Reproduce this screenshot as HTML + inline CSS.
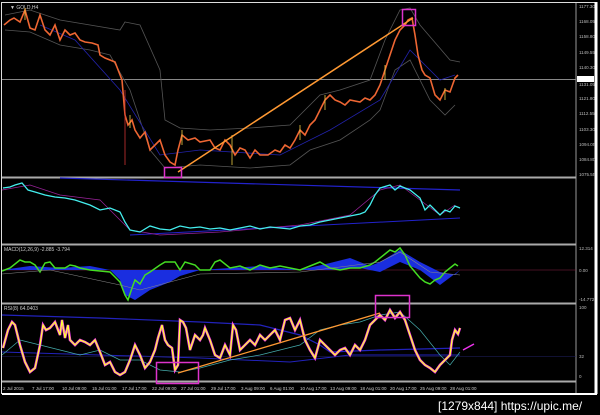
<!DOCTYPE html>
<html><head><meta charset="utf-8"><style>
html,body{margin:0;padding:0;background:#000;width:600px;height:415px;overflow:hidden}
svg{display:block}
text{font-family:"Liberation Sans",sans-serif}
</style></head><body>
<svg width="600" height="415" viewBox="0 0 600 415" xmlns="http://www.w3.org/2000/svg">
<rect width="600" height="415" fill="#000"/>
<rect x="1.5" y="2.5" width="595" height="391" fill="none" stroke="#ddd" stroke-width="1"/>
<line x1="596" y1="2" x2="596" y2="394" stroke="#fff" stroke-width="3"/>
<line x1="2" y1="394" x2="597" y2="394" stroke="#fff" stroke-width="2"/>
<line x1="576" y1="3" x2="576" y2="393" stroke="#999" stroke-width="1"/>
<g stroke="#aaa" stroke-width="2">
<line x1="2" y1="177.5" x2="576" y2="177.5"/>
<line x1="2" y1="244.5" x2="576" y2="244.5"/>
<line x1="2" y1="303.5" x2="576" y2="303.5"/>
<line x1="2" y1="381.5" x2="576" y2="381.5"/>
</g>
<text x="10" y="9" font-size="5" fill="#ccc">▼ GOLD,H4</text>
<line x1="2" y1="79.5" x2="576" y2="79.5" stroke="#888"/>
<rect x="577" y="76" width="17" height="6" fill="#fff"/>
<g font-size="4.5" fill="#bbb">
<text x="579" y="8">1177.30</text><text x="579" y="23">1168.05</text><text x="579" y="38">1158.80</text>
<text x="579" y="54">1149.55</text><text x="579" y="69">1140.30</text><text x="579" y="86">1131.05</text>
<text x="579" y="100">1121.80</text><text x="579" y="115">1112.55</text><text x="579" y="131">1103.30</text>
<text x="579" y="146">1094.05</text><text x="579" y="161">1084.80</text><text x="579" y="176">1075.55</text>
</g>
<polyline fill="none" stroke="#555" stroke-width="0.8" points="5,15 30,10 60,20 90,25 120,30 125,22 140,25 160,70 165,120 180,128 210,130 250,128 290,125 320,95 340,90 370,80 385,40 400,10 410,8 420,25 450,60 460,62"/>
<polyline fill="none" stroke="#555" stroke-width="0.8" points="5,30 30,32 60,45 90,50 110,55 130,90 150,150 165,168 200,165 250,168 290,165 310,150 340,140 370,120 380,110 395,70 410,60 430,100 445,115 455,105"/>
<polyline fill="none" stroke="#22a" stroke-width="0.8" points="40,25 75,40 120,90 160,155 200,150 280,155 330,130 380,100 410,50 440,80 455,75"/>
<polyline fill="none" stroke="#e63" stroke-width="1.6" points="4,25 10,20 14,18 20,22 25,10 30,28 35,30 40,15 45,30 50,35 55,25 60,40 65,30 70,35 75,33 80,40 85,42 92,43 98,45 100,55 105,58 110,60 115,62 122,80 125,115 128,125 132,120 135,130 140,138 145,132 150,150 155,145 160,140 165,155 170,162 175,165 178,150 182,135 188,140 195,138 200,142 210,140 215,148 220,150 225,140 230,145 235,155 240,148 245,150 250,158 255,150 260,155 268,155 275,150 280,152 285,145 290,148 295,140 300,130 305,135 310,125 315,120 320,110 325,100 330,95 335,100 340,102 345,105 350,100 360,102 365,98 370,100 375,95 380,85 385,70 390,55 395,40 400,30 405,25 408,20 412,18 415,35 418,55 422,70 425,75 430,78 435,95 440,100 445,90 450,92 455,78 458,75"/>
<g stroke="#ec4" stroke-width="0.8">
<line x1="25" y1="8" x2="25" y2="20"/><line x1="130" y1="115" x2="130" y2="128"/><line x1="182" y1="130" x2="182" y2="145"/><line x1="232" y1="135" x2="232" y2="165"/><line x1="300" y1="125" x2="300" y2="140"/><line x1="325" y1="95" x2="325" y2="110"/><line x1="385" y1="65" x2="385" y2="80"/><line x1="445" y1="88" x2="445" y2="100"/>
</g>
<line x1="125" y1="90" x2="125" y2="165" stroke="#c33" stroke-width="0.8"/>
<line x1="178" y1="172" x2="413" y2="18" stroke="#f93" stroke-width="1.5"/>
<rect x="164.5" y="167.5" width="17" height="10" fill="none" stroke="#d3c" stroke-width="1.5"/>
<rect x="402.5" y="9.5" width="13" height="16" fill="none" stroke="#d3c" stroke-width="1.5"/>
<line x1="60" y1="178" x2="460" y2="190" stroke="#22c" stroke-width="1.2"/>
<line x1="130" y1="235" x2="460" y2="218" stroke="#22c" stroke-width="1"/>
<polyline fill="none" stroke="#929" stroke-width="0.7" points="2,190 30,185 60,195 100,200 130,230 160,235 220,232 300,225 350,215 380,190 400,185 420,200 440,215 455,205"/>
<polyline fill="none" stroke="#4ee" stroke-width="1.3" points="3,188 10,187 15,185 22,183 28,190 35,192 45,195 55,197 65,198 75,200 90,205 100,210 110,208 120,212 125,222 130,230 140,232 150,226 160,229 170,230 180,226 190,228 200,227 210,229 220,228 230,230 240,228 250,226 260,229 270,227 280,228 290,229 300,226 310,225 320,222 330,220 340,218 350,216 360,214 365,212 370,205 375,195 380,188 390,185 395,190 400,186 410,190 420,198 425,210 430,205 435,210 440,215 445,210 450,212 455,206 460,208"/>
<text x="4" y="251" font-size="5" fill="#ccc">MACD(12,26,9) -2.885 -3.794</text>
<line x1="2" y1="270" x2="576" y2="270" stroke="#824" stroke-width="0.6"/>
<path fill="#1a2ee0" d="M2,270 L30,266 L60,268 L90,266 L110,270 L120,280 L125,295 L135,300 L150,290 L170,282 L180,276 L200,270 L230,268 L260,266 L300,270 L330,263 L350,258 L370,266 L380,262 L400,250 L420,262 L440,272 L455,275 L460,270 L440,285 L420,270 L400,262 L380,272 L360,268 L330,270 L300,270 L260,270 L220,270 L180,270 L150,270 L125,270 L110,270 L60,270 L30,270 Z"/>
<polyline fill="none" stroke="#4d2" stroke-width="1.5" points="2,271 10,268 20,260 25,262 30,262 35,265 40,272 45,263 50,262 55,268 65,268 70,265 75,266 80,268 90,270 100,271 110,272 120,282 125,295 128,300 132,288 135,280 140,284 145,275 150,272 160,265 165,262 175,262 180,270 185,262 195,265 200,270 210,270 215,262 220,260 230,268 240,266 250,270 260,265 270,268 280,266 290,268 300,270 310,266 320,262 330,268 340,270 350,268 360,268 370,265 375,262 380,258 385,254 390,250 395,252 400,248 405,255 410,266 415,272 420,278 425,282 430,284 435,280 440,278 445,272 450,268 455,264 458,266"/>
<polyline fill="none" stroke="#888" stroke-width="0.6" points="2,274 50,270 120,285 140,290 200,274 300,272 380,262 400,252 430,272 460,275"/>
<g font-size="4.5" fill="#bbb"><text x="579" y="250">12.314</text><text x="579" y="272">0.00</text><text x="579" y="301">-14.772</text></g>
<text x="4" y="310" font-size="5" fill="#ccc">RSI(8) 64.0403</text>
<polyline fill="none" stroke="#22b" stroke-width="1.2" points="2,315 100,318 200,322 260,325 300,335 320,345 330,352 380,350 460,348"/>
<polyline fill="none" stroke="#22b" stroke-width="1" points="2,352 100,355 200,358 290,362 350,355 460,355"/>
<line x1="2" y1="356.5" x2="576" y2="356.5" stroke="#226" stroke-width="0.6"/>
<polyline fill="none" stroke="#4aa" stroke-width="0.7" points="2,355 20,340 40,345 60,350 80,355 100,350 120,360 140,360 160,370 180,372 200,368 230,360 260,355 300,345 320,330 340,325 360,322 380,315 400,312 420,330 440,355 450,365 460,352"/>
<polyline fill="none" stroke="#e3e" stroke-width="2.6" points="3,348 8,330 12,322 15,325 20,345 25,362 30,372 35,368 40,345 43,325 46,330 50,328 55,322 60,335 62,320 65,338 68,325 70,340 75,345 80,340 85,342 90,345 95,340 100,352 105,365 110,362 115,372 120,375 125,372 130,360 135,345 140,355 145,368 150,362 155,350 158,338 162,325 165,340 168,345 172,348 175,370 178,365 180,320 183,322 186,328 190,350 195,335 200,340 203,335 205,328 210,340 215,355 220,358 225,345 230,355 233,325 236,330 240,350 245,345 250,340 255,345 260,335 265,340 270,335 275,330 280,340 285,320 290,318 295,330 300,320 305,340 310,350 315,358 320,340 325,345 330,350 335,355 340,350 345,348 350,355 355,345 360,350 365,340 370,325 375,320 380,315 385,320 390,310 395,318 400,312 405,320 410,335 415,350 420,360 425,365 430,368 435,372 440,365 445,360 450,355 452,340 455,330 458,334 460,328"/>
<polyline fill="none" stroke="#ff3" stroke-width="1.3" points="3,348 8,330 12,322 15,325 20,345 25,362 30,372 35,368 40,345 43,325 46,330 50,328 55,322 60,335 62,320 65,338 68,325 70,340 75,345 80,340 85,342 90,345 95,340 100,352 105,365 110,362 115,372 120,375 125,372 130,360 135,345 140,355 145,368 150,362 155,350 158,338 162,325 165,340 168,345 172,348 175,370 178,365 180,320 183,322 186,328 190,350 195,335 200,340 203,335 205,328 210,340 215,355 220,358 225,345 230,355 233,325 236,330 240,350 245,345 250,340 255,345 260,335 265,340 270,335 275,330 280,340 285,320 290,318 295,330 300,320 305,340 310,350 315,358 320,340 325,345 330,350 335,355 340,350 345,348 350,355 355,345 360,350 365,340 370,325 375,320 380,315 385,320 390,310 395,318 400,312 405,320 410,335 415,350 420,360 425,365 430,368 435,372 440,365 445,360 450,355 452,340 455,330 458,334 460,328"/>
<line x1="178" y1="373" x2="380" y2="313" stroke="#f93" stroke-width="1.3"/>
<line x1="463" y1="350" x2="474" y2="344" stroke="#e3e" stroke-width="1.5"/>
<rect x="156.5" y="362.5" width="42" height="21" fill="none" stroke="#d3c" stroke-width="1.5"/>
<rect x="375.5" y="295.5" width="34" height="22" fill="none" stroke="#d3c" stroke-width="1.5"/>
<g font-size="4.5" fill="#bbb"><text x="579" y="309">100</text><text x="579" y="358">32</text><text x="579" y="378">0</text></g>
<g font-size="4.5" fill="#ccc">
<text x="3" y="390">2 Jul 2015</text><text x="32" y="390">7 Jul 17:00</text><text x="62" y="390">10 Jul 09:00</text>
<text x="92" y="390">15 Jul 01:00</text><text x="122" y="390">17 Jul 17:00</text><text x="152" y="390">22 Jul 09:00</text>
<text x="181" y="390">27 Jul 01:00</text><text x="211" y="390">29 Jul 17:00</text><text x="241" y="390">3 Aug 09:00</text>
<text x="270" y="390">6 Aug 01:00</text><text x="300" y="390">10 Aug 17:00</text><text x="330" y="390">13 Aug 09:00</text>
<text x="360" y="390">18 Aug 01:00</text><text x="390" y="390">20 Aug 17:00</text><text x="420" y="390">25 Aug 09:00</text>
<text x="450" y="390">28 Aug 01:00</text>
</g>
<text x="438" y="410" font-size="12" fill="#fff">[1279x844] https://upic.me/</text>
</svg>
</body></html>
